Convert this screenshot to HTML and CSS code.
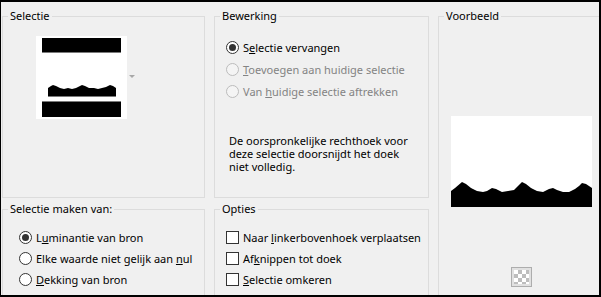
FILE: index.html
```html
<!DOCTYPE html>
<html lang="nl">
<head>
    <meta charset="UTF-8">
    <title>Selectie uit masker</title>
    <link rel="stylesheet" href="styles.css">
</head>
<body>
    <div class="dialog">
        <div class="panes">
            <!-- Selectie -->
            <fieldset class="group group-selectie">
                <legend>Selectie</legend>
                <div class="thumb-row">
                    <svg class="thumb" width="91" height="83" viewBox="0 0 91 83">
                        <rect x="0" y="0" width="91" height="83" fill="#fff"/>
                        <rect x="6" y="2" width="79" height="14" fill="#000"/>
                        <rect x="6" y="16" width="79" height="1" fill="#7a7a7a"/>
                        <path d="M12,52 L15,50 L17,49 L20,50 L24,52 L28,53 L32,52 L36,53 L40,52 L44,50 L46,49 L49,50 L53,52 L58,52 L62,53 L66,52 L70,51 L74,49 L77,50 L80,52 L80,61 L12,61 Z" fill="#000"/>
                        <rect x="12" y="60" width="68" height="1" fill="#7a7a7a"/>
                        <rect x="6" y="65" width="79" height="1" fill="#7a7a7a"/>
                        <rect x="6" y="66" width="79" height="15" fill="#000"/>
                    </svg>
                    <span class="drop-arrow"></span>
                </div>
            </fieldset>

            <!-- Bewerking -->
            <fieldset class="group group-bewerking">
                <legend>Bewerking</legend>
                <div class="options tall">
                    <label class="option"><span class="radio checked"></span><span>S<u>e</u>lectie vervangen</span></label>
                    <label class="option disabled"><span class="radio"></span><span><u>T</u>oevoegen aan huidige selectie</span></label>
                    <label class="option disabled"><span class="radio"></span><span>Van <u>h</u>uidige selectie aftrekken</span></label>
                </div>
                <p class="note">De oorspronkelijke rechthoek voor<br>deze selectie doorsnijdt het doek<br>niet volledig.</p>
            </fieldset>

            <!-- Voorbeeld -->
            <fieldset class="group group-voorbeeld">
                <legend>Voorbeeld</legend>
                <div class="preview-col">
                    <svg class="preview" width="141" height="91" viewBox="0 0 141 91">
                        <rect x="0" y="0" width="141" height="91" fill="#fff"/>
                        <path d="M0,75 L4,72 L11,66 L15,68 L20,72 L26,75 L32,76 L36,75 L41,72 L45,73 L51,76 L57,75 L63,74 L67,70 L71,66 L75,68 L80,72 L86,75 L92,76 L98,73 L102,72 L106,74 L112,76 L118,76 L124,73 L128,70 L131,67 L135,68 L141,72 L141,91 L0,91 Z" fill="#000"/>
                    </svg>
                    <span class="bg-button"><span class="checker"></span></span>
                </div>
            </fieldset>

            <!-- Selectie maken van -->
            <fieldset class="group group-bron">
                <legend>Selectie maken van:</legend>
                <div class="options">
                    <label class="option"><span class="radio checked"></span><span>L<u>u</u>minantie van bron</span></label>
                    <label class="option"><span class="radio"></span><span>Elke waarde niet gelijk aan <u>n</u>ul</span></label>
                    <label class="option"><span class="radio"></span><span><u>D</u>ekking van bron</span></label>
                </div>
            </fieldset>

            <!-- Opties -->
            <fieldset class="group group-opties">
                <legend>Opties</legend>
                <div class="options">
                    <label class="option"><span class="check"></span><span>Naar <u>l</u>inkerbovenhoek verplaatsen</span></label>
                    <label class="option"><span class="check"></span><span>Af<u>k</u>nippen tot doek</span></label>
                    <label class="option"><span class="check"></span><span><u>S</u>electie omkeren</span></label>
                </div>
            </fieldset>
        </div>
    </div>
</body>
</html>
```

FILE: styles.css
```css
* {
    box-sizing: border-box;
}
body {
    margin: 0;
    font-family: "Noto Sans", sans-serif;
    font-size: 11px;
    color: #000;
    background: #f0f0f0;
}
.dialog {
    width: 601px;
    height: 297px;
    border: 2px solid #000;
    border-left-width: 1px;
    background: #f0f0f0;
    overflow: hidden;
}
.panes {
    display: grid;
    grid-template-columns: 203px 215px 167px;
    grid-template-rows: 190px 100px;
    column-gap: 9px;
    row-gap: 3px;
    padding: 6px 0 0 1px;
}
.group {
    margin: 0;
    padding: 0;
    min-width: 0;
    border: 1px solid #dcdcdc;
}
.group legend {
    margin-left: 5px;
    padding: 0 2px;
    line-height: 16px;
}
.group-voorbeeld {
    grid-column: 3;
    grid-row: 1 / 3;
}
.group-bron {
    grid-column: 1;
    grid-row: 2;
}
.group-opties {
    grid-column: 2;
    grid-row: 2;
}

/* selectie thumbnail */
.thumb-row {
    display: flex;
    align-items: center;
    gap: 2px;
    margin: 12px 0 0 33px;
}
.thumb {
    display: block;
}
.drop-arrow {
    width: 0;
    height: 0;
    border-left: 3px solid transparent;
    border-right: 3px solid transparent;
    border-top: 3px solid #a8a8a8;
    margin-top: -3px;
}

/* radio / checkbox rows */
.options {
    display: flex;
    flex-direction: column;
    padding: 10px 0 0 16px;
}
.option {
    display: flex;
    align-items: center;
    gap: 4px;
    height: 21px;
    white-space: nowrap;
}
.options.tall {
    padding: 12px 0 0 11px;
}
.options.tall .option {
    height: 22px;
}
.group-opties .options {
    padding-left: 11px;
}
.radio {
    position: relative;
    flex: none;
    width: 13px;
    height: 13px;
    border: 1px solid #333;
    border-radius: 50%;
    background: #fff;
}
.radio.checked::after {
    content: "";
    position: absolute;
    left: 2px;
    top: 2px;
    width: 7px;
    height: 7px;
    border-radius: 50%;
    background: #333;
}
.option.disabled {
    color: #838383;
}
.option.disabled .radio {
    border-color: #bcbcbc;
    background: #f4f4f4;
}
.check {
    flex: none;
    width: 13px;
    height: 13px;
    border: 1px solid #333;
    background: #fff;
}
.note {
    margin: 32px 0 0 14px;
    line-height: 13px;
}

/* voorbeeld */
.preview-col {
    display: flex;
    flex-direction: column;
    align-items: center;
}
.preview {
    display: block;
    margin-top: 92px;
}
.bg-button {
    margin-top: 60px;
    width: 21px;
    height: 20px;
    padding: 2px;
    border: 1px solid #adadad;
    background: #e1e1e1;
}
.checker {
    display: block;
    width: 100%;
    height: 100%;
    background: repeating-conic-gradient(#bdbdbd 0 25%, #fff 0 50%) 0 0 / 8px 8px;
}
```
